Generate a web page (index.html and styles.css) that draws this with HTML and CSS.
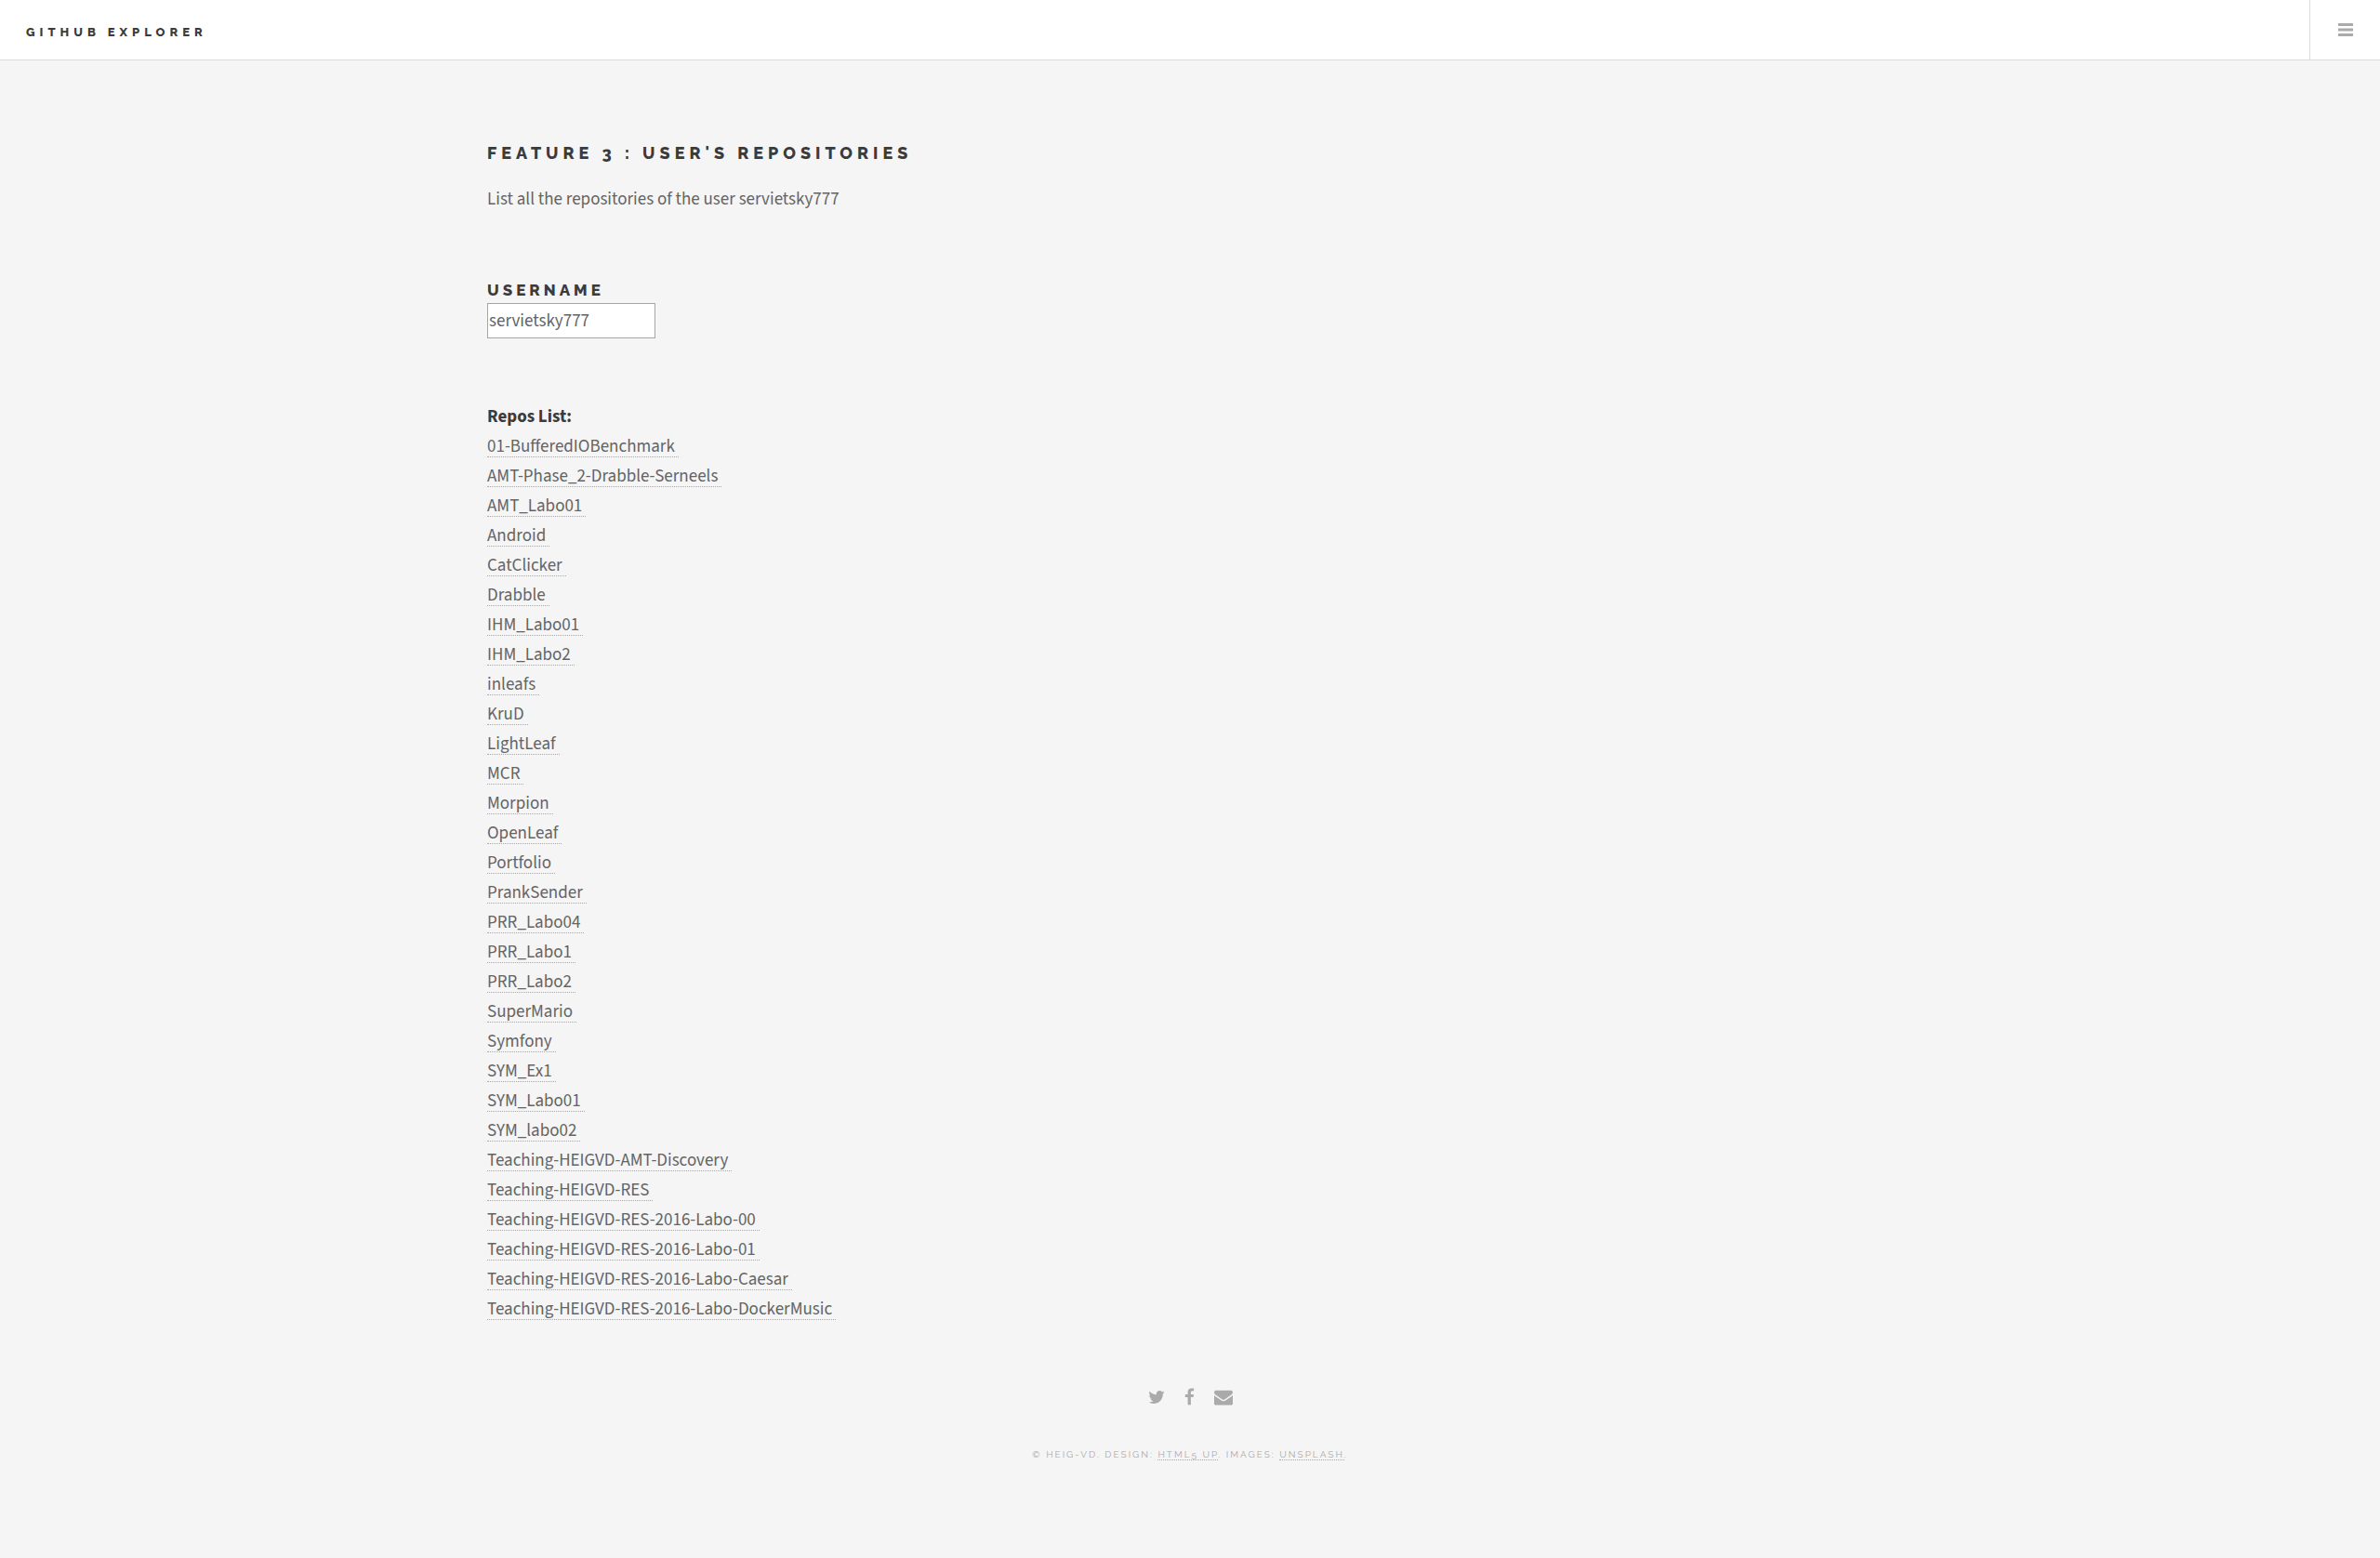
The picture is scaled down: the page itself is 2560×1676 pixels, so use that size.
FILE: index.html
```html
<!DOCTYPE html>
<html lang="en">
<head>
<meta charset="utf-8">
<meta name="viewport" content="width=device-width, initial-scale=1">
<title>GitHub Explorer</title>
<link rel="stylesheet" href="styles.css">
</head>
<body>
<header class="header">
  <h1 class="brand"><a href="#">GitHub Explorer</a></h1>
  <button class="menu" type="button" aria-label="Menu">
    <svg width="16" height="16" viewBox="0 0 16 16" aria-hidden="true"><path d="M0 1h16v3H0zM0 6.500h16v3H0zM0 12h16v3H0z"/></svg>
  </button>
</header>
<div class="wrapper">
  <main>
    <h2 class="title">Feature 3 : User's repositories</h2>
    <p class="intro">List all the repositories of the user servietsky777</p>
    <form class="search">
      <label for="username">Username</label>
      <input id="username" type="text" value="servietsky777">
    </form>
    <section class="repos">
      <strong>Repos List:</strong>
      <ul>
        <li><a href="#">01-BufferedIOBenchmark</a></li>
        <li><a href="#">AMT-Phase_2-Drabble-Serneels</a></li>
        <li><a href="#">AMT_Labo01</a></li>
        <li><a href="#">Android</a></li>
        <li><a href="#">CatClicker</a></li>
        <li><a href="#">Drabble</a></li>
        <li><a href="#">IHM_Labo01</a></li>
        <li><a href="#">IHM_Labo2</a></li>
        <li><a href="#">inleafs</a></li>
        <li><a href="#">KruD</a></li>
        <li><a href="#">LightLeaf</a></li>
        <li><a href="#">MCR</a></li>
        <li><a href="#">Morpion</a></li>
        <li><a href="#">OpenLeaf</a></li>
        <li><a href="#">Portfolio</a></li>
        <li><a href="#">PrankSender</a></li>
        <li><a href="#">PRR_Labo04</a></li>
        <li><a href="#">PRR_Labo1</a></li>
        <li><a href="#">PRR_Labo2</a></li>
        <li><a href="#">SuperMario</a></li>
        <li><a href="#">Symfony</a></li>
        <li><a href="#">SYM_Ex1</a></li>
        <li><a href="#">SYM_Labo01</a></li>
        <li><a href="#">SYM_labo02</a></li>
        <li><a href="#">Teaching-HEIGVD-AMT-Discovery</a></li>
        <li><a href="#">Teaching-HEIGVD-RES</a></li>
        <li><a href="#">Teaching-HEIGVD-RES-2016-Labo-00</a></li>
        <li><a href="#">Teaching-HEIGVD-RES-2016-Labo-01</a></li>
        <li><a href="#">Teaching-HEIGVD-RES-2016-Labo-Caesar</a></li>
        <li><a href="#">Teaching-HEIGVD-RES-2016-Labo-DockerMusic</a></li>
      </ul>
    </section>
  </main>
  <footer class="footer">
    <nav class="social" aria-label="Social">
      <a href="#" aria-label="Twitter"><svg width="18" height="20" viewBox="64 0 1664 1792"><path d="M1684 408q-67 98-162 167 1 14 1 42 0 130-38 259.500t-115.500 248.500-184.500 210.500-258 146-323 54.500q-271 0-496-145 35 4 78 4 225 0 401-138-105-2-188-64.500t-114-159.500q33 5 61 5 43 0 85-11-112-23-185.500-111.500t-73.500-205.500v-4q68 38 146 41-66-44-105-115t-39-154q0-88 44-163 121 149 294.500 238.500t371.500 99.500q-8-38-8-74 0-134 94.500-228.500t228.500-94.500q140 0 236 102 109-21 205-78-37 115-142 178 93-10 186-50z"/></svg></a>
      <a href="#" aria-label="Facebook"><svg width="11" height="20" viewBox="400 0 1024 1792"><path d="M1343 12v264h-157q-86 0-116 36t-30 108v189h293l-39 296h-254v759h-306v-759h-255v-296h255v-218q0-186 104-288.500t277-102.500q147 0 228 12z"/></svg></a>
      <a href="#" aria-label="Email"><svg width="20" height="20" viewBox="0 0 1792 1792"><path d="M1792 710v794q0 66-47 113t-113 47h-1472q-66 0-113-47t-47-113v-794q44 49 101 87 362 246 497 345 57 42 92.500 65.500t94.500 48 110 24.500h2q51 0 110-24.500t94.500-48 92.500-65.500q170-123 498-345 57-39 100-87zm0-294q0 79-49 151t-122 123q-376 261-468 325-10 7-42.500 31t-54 38.500-52 32.500-57.500 27-50 9h-2q-23 0-50-9t-57.500-27-52-32.500-54-38.500-42.500-31q-91-64-262-182.500t-205-142.500q-62-42-117-115.500t-55-136.500q0-78 41.500-130t118.500-52h1472q65 0 112.500 47t47.500 113z"/></svg></a>
    </nav>
    <p class="copyright">© HEIG-VD. Design: <a href="#">HTML5 UP</a>. Images: <a href="#">Unsplash</a>.</p>
  </footer>
</div>
</body>
</html>
```
FILE: styles.css
```css
* {
  box-sizing: border-box;
}

body {
  margin: 0;
  background: #f5f5f5;
  color: #646464;
  font: 19px/32px "Source Sans 3", "Noto Sans CJK SC", sans-serif;
}

h1, h2, p, ul {
  margin: 0;
  padding: 0;
}

a {
  color: inherit;
  text-decoration: none;
}

.header {
  display: flex;
  justify-content: space-between;
  height: 65px;
  background: #fff;
  border-bottom: 1px solid #dcdcdc;
}

.brand,
.title,
.search label {
  color: #3c3b3b;
  font-family: Raleway, Lato, sans-serif;
  font-weight: 800;
  text-transform: uppercase;
}

.brand {
  padding-left: 28px;
  font-size: 13px;
  line-height: 70px;
  letter-spacing: 5px;
}

.menu {
  width: 76px;
  padding: 0;
  border: 0;
  border-left: 1px solid #dcdcdc;
  background: none;
}

svg {
  display: block;
  margin: auto;
  fill: #aaa;
}

.wrapper {
  max-width: 1680px;
  margin: 0 auto;
  padding: 84px 84px 92px;
}

.title {
  font-size: 18px;
  letter-spacing: 5px;
}

.intro {
  margin-top: 18px;
}

.search {
  display: flex;
  flex-direction: column;
  align-items: flex-start;
  margin-top: 67px;
}

.search label {
  font-size: 17px;
  line-height: 28px;
  letter-spacing: 4px;
}

.search input {
  width: 181px;
  height: 38px;
  padding: 0 1px;
  border: 1px solid #a6a6a6;
  background: #fff;
  color: inherit;
  font: inherit;
}

.repos {
  margin-top: 69px;
}

.repos strong {
  display: block;
  color: #3c3b3b;
}

.repos ul {
  list-style: none;
}

.repos li {
  display: flex;
  height: 32px;
}

.repos a {
  height: 27px;
  padding-right: 4px;
  border-bottom: 1px dotted #a8a8a8;
}

.footer {
  margin-top: 68px;
  color: #aaa;
  text-align: center;
}

.social {
  display: flex;
  justify-content: center;
  gap: 21px;
}

.copyright {
  margin-top: 36px;
  font: 10px/32px Raleway, Lato, sans-serif;
  letter-spacing: 2px;
  text-transform: uppercase;
}

.copyright a {
  border-bottom: 1px dotted #a8a8a8;
}
```
